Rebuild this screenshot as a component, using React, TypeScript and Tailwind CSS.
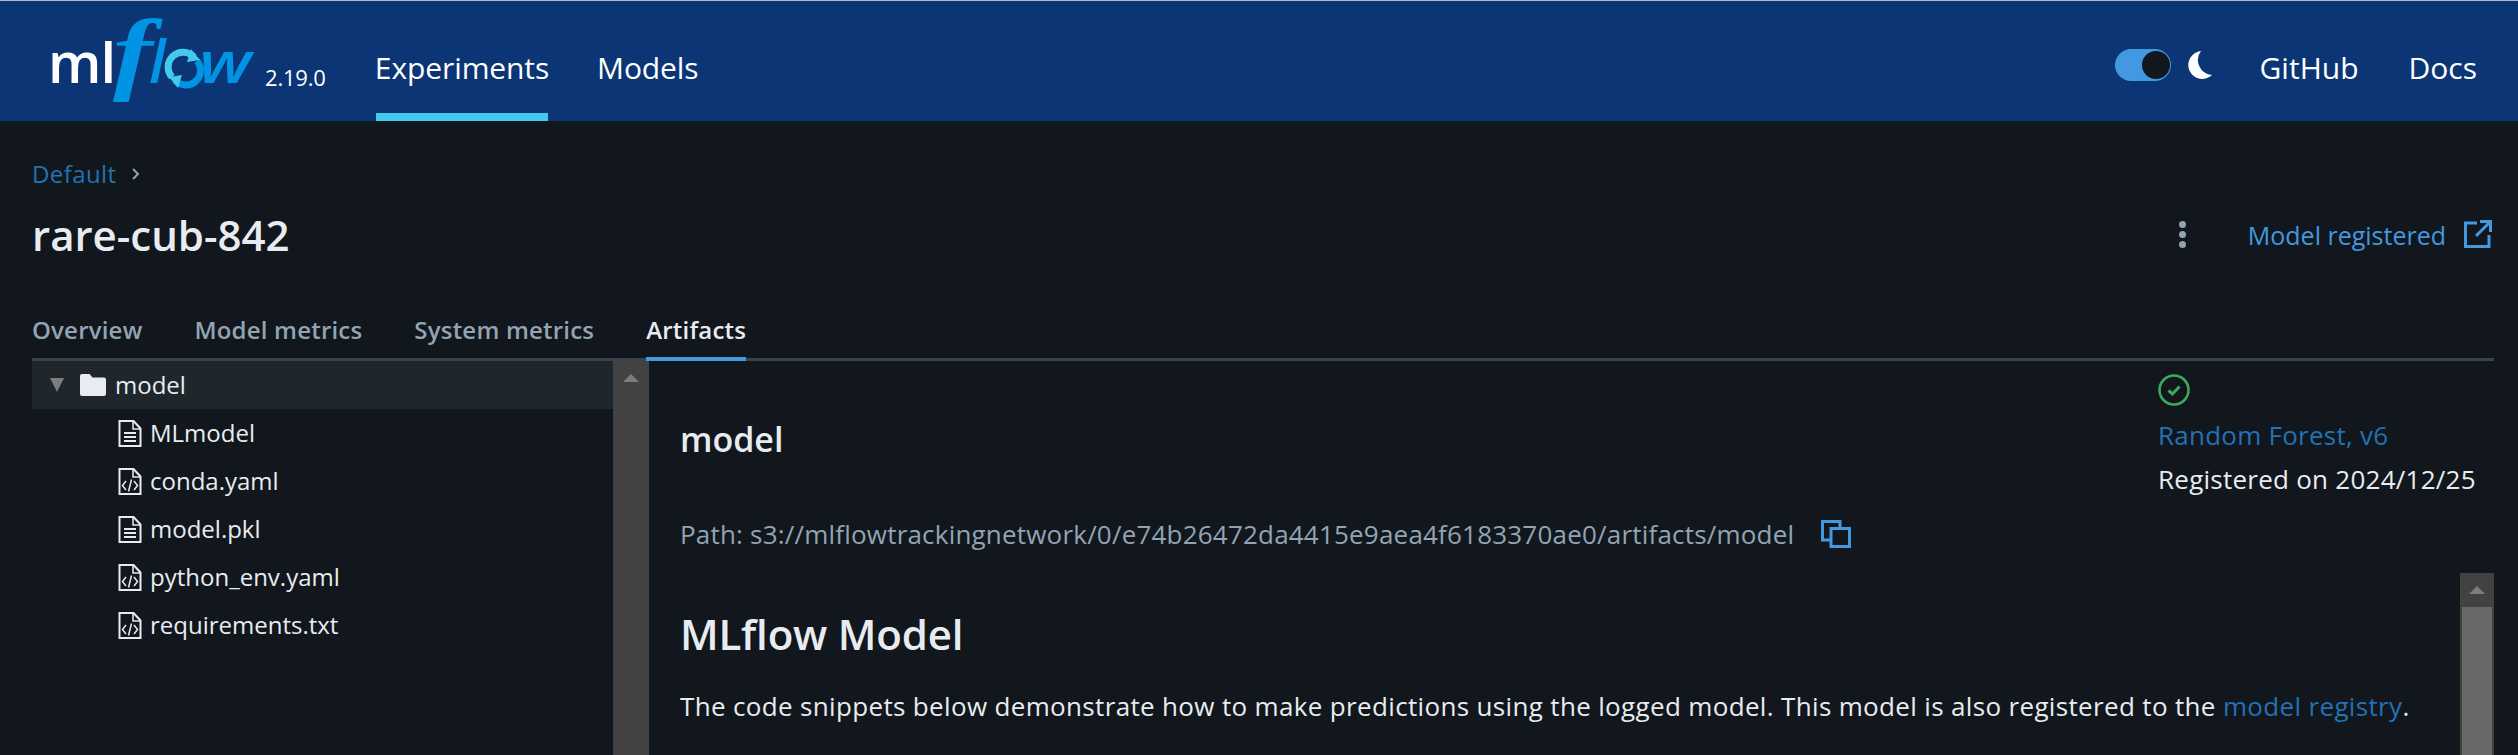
import React from "react";

const font = { fontFamily: '"Open Sans", "Noto Sans", sans-serif' };

function Logo() {
  return (
    <svg width="213" height="90" viewBox="0 0 213 90" className="shrink-0 overflow-visible">
      <text x="0" y="67" fill="#ffffff" fontFamily="Open Sans, sans-serif" fontWeight="600" fontSize="56" letterSpacing="-1">
        ml
      </text>
      <text
        transform="translate(65 67) scale(1.3 1)"
        fill="#0194e2"
        fontFamily="Liberation Serif, serif"
        fontStyle="italic"
        fontWeight="700"
        fontSize="92"
      >
        f
      </text>
      <text x="101" y="67" fill="#0194e2" fontFamily="Open Sans, sans-serif" fontStyle="italic" fontWeight="600" fontSize="60">
        l
      </text>
      <g fill="none" strokeWidth="7">
        <path d="M124 61A14 14 0 0 1 146 41" stroke="#43c9ed" />
        <path d="M149 45A14 14 0 0 1 127 64" stroke="#0194e2" />
      </g>
      <path d="M143 33l9 11-13 2zM130 72l-9-11 13-2z" fill="#43c9ed" />
      <text transform="translate(151 67) scale(1.2 1)" fill="#0194e2" fontFamily="Open Sans, sans-serif" fontStyle="italic" fontWeight="600" fontSize="58">
        w
      </text>
    </svg>
  );
}

function FileIcon({ code }: { code?: boolean }) {
  return (
    <svg width="24" height="27" viewBox="0 0 24 27" fill="none" stroke="#e8ecf1" strokeWidth="2" className="shrink-0">
      <path d="M1.500 1h14l7 7.500V26h-21z" />
      <path d="M15 1v8h7.500" strokeWidth="1.500" />
      {code ? (
        <g strokeWidth="1.500">
          <path d="M8 13l-3.500 4.500L8 22M16 13l3.500 4.500L16 22M13.500 11.500l-3 12" />
        </g>
      ) : (
        <g strokeWidth="1.800">
          <path d="M6 13h12M6 17h12M6 21h12" />
        </g>
      )}
    </svg>
  );
}

function FileRow({ name, code }: { name: string; code?: boolean }) {
  return (
    <div className="flex h-12 items-center gap-[8px] pl-[86px] text-[24px] text-[#e8ecf1]">
      <FileIcon code={code} />
      <span>{name}</span>
    </div>
  );
}

function ScrollArrow() {
  return <div className="h-0 w-0 border-x-[8px] border-b-[8px] border-x-transparent border-b-[#7d7d7d]" />;
}

export default function App() {
  return (
    <div className="h-[755px] w-[2518px] overflow-hidden bg-[#11171c]" style={font}>
      <header className="flex h-[121px] items-center border-t border-[#b4b8bd] bg-[#0b3574] pl-[48px] pr-[41px] text-white">
        <Logo />
        <span className="ml-[4px] mt-[32px] w-[111px] shrink-0 text-[22px] tracking-[-0.2px]">2.19.0</span>
        <nav className="flex h-full items-stretch gap-[49px] text-[30px] tracking-[-0.1px]">
          <a className="flex w-[172px] items-center justify-center border-b-[8px] border-[#43c9ed] pt-[20px]">Experiments</a>
          <a className="flex items-center pt-[12px]">Models</a>
        </nav>
        <div className="ml-auto flex items-center pt-[8px]">
          <div className="flex h-[32px] w-[56px] items-center justify-end rounded-full bg-[#4299e0] pr-[1px]">
            <div className="h-[28px] w-[28px] rounded-full bg-[#11171c]" />
          </div>
          <svg width="26" height="30" viewBox="0 0 26 30" className="ml-[16px]">
            <path d="M14 1A14 14 0 1 0 25 25A15 15 0 0 1 14 1z" fill="#ffffff" />
          </svg>
          <span className="ml-[47px] mt-[4px] text-[30px]">GitHub</span>
          <span className="ml-[50px] mt-[4px] text-[30px]">Docs</span>
        </div>
      </header>

      <div className="pl-[32px] pr-[24px]">
        <div className="mt-[35px] flex h-[36px] items-center gap-[14px] text-[24px] tracking-[0.4px] text-[#2272b4]">
          <span>Default</span>
          <svg width="12" height="16" viewBox="0 0 12 16" fill="none" stroke="#92a4b3" strokeWidth="2">
            <path d="M3 3l5 5-5 5" />
          </svg>
        </div>

        <div className="mt-[16px] flex h-[52px] items-center justify-between pr-[2px]">
          <h1 className="text-[42px] font-semibold text-[#e8ecf1]">rare-cub-842</h1>
          <div className="flex items-center">
            <div className="flex flex-col gap-[3px]">
              <div className="h-[7px] w-[7px] rounded-full bg-[#92a4b3]" />
              <div className="h-[7px] w-[7px] rounded-full bg-[#92a4b3]" />
              <div className="h-[7px] w-[7px] rounded-full bg-[#92a4b3]" />
            </div>
            <span className="ml-[62px] mt-[3px] text-[25px] text-[#4299e0]">Model registered</span>
            <svg width="28" height="28" viewBox="0 0 28 28" fill="none" stroke="#4299e0" strokeWidth="3" className="ml-[18px]">
              <path d="M13 3H1.500v23.500H25V15M16 1.500h10.500V12M26 2L12 16" />
            </svg>
          </div>
        </div>

        <div className="mt-[54px] flex h-[47px] gap-[52px] border-b-[3px] border-[#37444f] text-[24px] font-semibold leading-[32px] tracking-[0.2px] text-[#92a4b3]">
          <span>Overview</span>
          <span>Model metrics</span>
          <span>System metrics</span>
          <span className="-mb-[3px] border-b-[4px] border-[#4299e0] text-[#e8ecf1]">Artifacts</span>
        </div>

        <div className="flex h-[394px]">
          <div className="w-[581px] shrink-0">
            <div className="flex h-12 items-center bg-[#1f272d] pl-[18px] text-[24px] text-[#e8ecf1]">
              <div className="h-0 w-0 border-x-[7px] border-t-[14px] border-x-transparent border-t-[#7d7d7d]" />
              <svg width="26" height="22" viewBox="0 0 26 22" className="ml-[16px]">
                <path d="M2 0h7.500l3 3.500H24a2 2 0 0 1 2 2V20a2 2 0 0 1-2 2H2a2 2 0 0 1-2-2V2a2 2 0 0 1 2-2z" fill="#e8ecf1" />
              </svg>
              <span className="ml-[9px]">model</span>
            </div>
            <FileRow name="MLmodel" />
            <FileRow name="conda.yaml" code />
            <FileRow name="model.pkl" />
            <FileRow name="python_env.yaml" code />
            <FileRow name="requirements.txt" code />
          </div>

          <div className="flex w-[36px] shrink-0 justify-center bg-[#424242] pt-[13px]">
            <ScrollArrow />
          </div>

          <div className="relative min-w-0 flex-1 pl-[31px]">
            <div className="absolute right-0 top-[13px] w-[336px] text-[26px] tracking-[0.25px]">
              <svg width="32" height="32" viewBox="0 0 32 32" fill="none" stroke="#3caa60" strokeWidth="2.500">
                <circle cx="16" cy="16" r="14.500" />
                <path d="M10.500 16.500l4 3.500 7-7.500" strokeWidth="3" />
              </svg>
              <div className="mt-[14px] h-[30px] leading-[30px] text-[#2272b4]">Random Forest, v6</div>
              <div className="mt-[14px] h-[30px] leading-[30px] text-[#e8ecf1]">Registered on 2024/12/25</div>
            </div>

            <h2 className="mt-[56px] h-[44px] text-[34px] font-semibold leading-[44px] text-[#e8ecf1]">model</h2>
            <div className="mt-[51px] flex h-[44px] items-center text-[26px] tracking-[0.2px] text-[#92a4b3]">
              <span>Path: s3://mlflowtrackingnetwork/0/e74b26472da4415e9aea4f6183370ae0/artifacts/model</span>
              <svg width="30" height="28" viewBox="0 0 30 28" fill="none" stroke="#4299e0" strokeWidth="3" className="ml-[27px] shrink-0">
                <path d="M19 7V1.500H1.500V20H9" />
                <path d="M10 8.500h18.500v18H10z" />
              </svg>
            </div>
            <h3 className="mt-[50px] h-[56px] text-[42px] font-semibold leading-[56px] tracking-[-0.2px] text-[#e8ecf1]">MLflow Model</h3>
            <p className="mt-[28px] whitespace-nowrap text-[26px] leading-[32px] tracking-[0.34px] text-[#e8ecf1]">
              The code snippets below demonstrate how to make predictions using the logged model. This model is also registered to the{" "}
              <a className="text-[#2272b4]">model registry</a>.
            </p>

            <div className="absolute bottom-0 right-0 top-[212px] flex w-[34px] flex-col bg-[#424242]">
              <div className="flex h-[34px] shrink-0 items-center justify-center">
                <ScrollArrow />
              </div>
              <div className="mx-[2px] flex-1 bg-[#686868]" />
            </div>
          </div>
        </div>
      </div>
    </div>
  );
}
